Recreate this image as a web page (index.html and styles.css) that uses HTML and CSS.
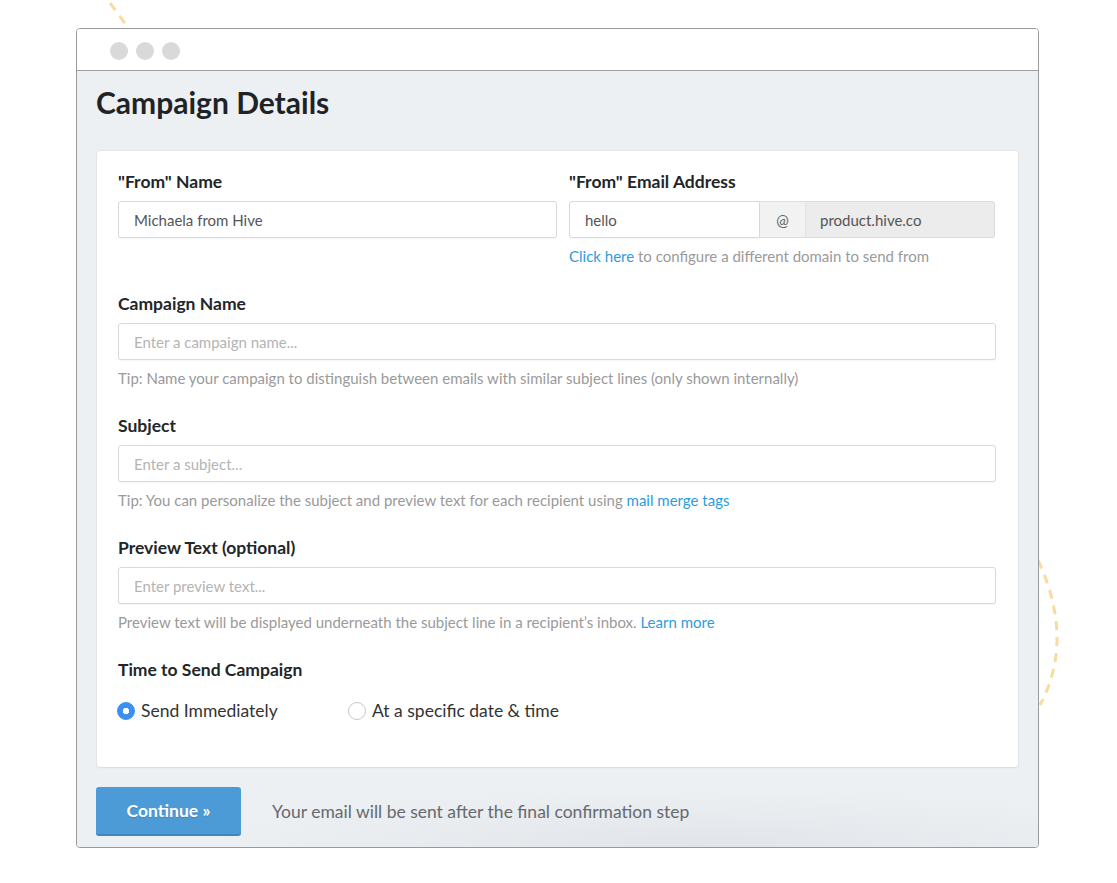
FILE: index.html
```html
<!DOCTYPE html>
<html>
<head>
<meta charset="utf-8">
<link rel="stylesheet" href="styles.css">
</head>
<body>
<svg class="deco" width="1117" height="883" viewBox="0 0 1117 883">
  <path d="M110 3 L130 30" stroke="#f8dba0" stroke-width="3" stroke-dasharray="9 7" fill="none"/>
  <path d="M1038 560 Q1075 640 1040 705" stroke="#f8dba0" stroke-width="3" stroke-dasharray="9 7" fill="none"/>
</svg>
<div class="window">
  <div class="titlebar">
    <span class="dot"></span><span class="dot"></span><span class="dot"></span>
  </div>
  <div class="content">
    <h1 class="title">Campaign Details</h1>
    <div class="card">
      <div class="row-two">
        <div class="field">
          <div class="label">"From" Name</div>
          <div class="input">Michaela from Hive</div>
        </div>
        <div class="field">
          <div class="label">"From" Email Address</div>
          <div class="input-group">
            <div class="input ig-main">hello</div>
            <div class="ig-at">@</div>
            <div class="ig-domain">product.hive.co</div>
          </div>
          <div class="help"><a class="link">Click here</a> to configure a different domain to send from</div>
        </div>
      </div>
      <div class="field">
        <div class="label">Campaign Name</div>
        <div class="input placeholder">Enter a campaign name...</div>
        <div class="help">Tip: Name your campaign to distinguish between emails with similar subject lines (only shown internally)</div>
      </div>
      <div class="field">
        <div class="label">Subject</div>
        <div class="input placeholder">Enter a subject...</div>
        <div class="help">Tip: You can personalize the subject and preview text for each recipient using <a class="link">mail merge tags</a></div>
      </div>
      <div class="field">
        <div class="label">Preview Text (optional)</div>
        <div class="input placeholder">Enter preview text...</div>
        <div class="help">Preview text will be displayed underneath the subject line in a recipient’s inbox. <a class="link">Learn more</a></div>
      </div>
      <div class="field last">
        <div class="label">Time to Send Campaign</div>
        <div class="radios">
          <div class="radio"><span class="circle checked"></span>Send Immediately</div>
          <div class="radio"><span class="circle"></span>At a specific date &amp; time</div>
        </div>
      </div>
    </div>
    <div class="footer">
      <div class="btn">Continue »</div>
      <div class="footnote">Your email will be sent after the final confirmation step</div>
    </div>
  </div>
</div>
</body>
</html>
```

FILE: styles.css
```css
html, body {
  margin: 0;
  padding: 0;
  background: #fff;
}
body {
  font-family: Lato, "Open Sans", sans-serif;
  color: #222;
  position: relative;
  width: 1117px;
  height: 883px;
  overflow: hidden;
}
.deco {
  position: absolute;
  left: 0;
  top: 0;
  z-index: 0;
}
.window {
  position: relative;
  z-index: 1;
  margin: 28px 0 0 76px;
  width: 961px;
  height: 818px;
  border: 1px solid #9a9a9a;
  border-radius: 4px;
  background: #edf0f3;
  overflow: hidden;
  display: flex;
  flex-direction: column;
}
.titlebar {
  height: 42px;
  background: #fff;
  border-bottom: 1px solid #a0a0a0;
  display: flex;
  align-items: center;
  gap: 8px;
  padding-left: 33px;
  padding-top: 2px;
  box-sizing: border-box;
  flex-shrink: 0;
}
.dot {
  width: 18px;
  height: 18px;
  border-radius: 50%;
  background: #d9d9d9;
}
.content {
  flex: 1;
  padding: 13px 20px 0 20px;
  background: radial-gradient(ellipse 500px 60px at 620px 100%, #e1e5e9 0%, rgba(237,240,243,0) 100%), #edf0f3;
}
.title {
  margin: 0 0 31px -1px;
  font-size: 30px;
  line-height: 36px;
  font-weight: 700;
  color: #1f2326;
}
.card {
  background: #fff;
  border-radius: 3px;
  box-shadow: 0 0 2px rgba(0,0,0,0.12), 0 1px 2px rgba(0,0,0,0.06);
  padding: 20px 22px 45px 21px;
}
.row-two {
  display: grid;
  grid-template-columns: 439px 1fr;
  column-gap: 12px;
  margin-bottom: 27px;
}
.row-two .field {
  margin-bottom: 0;
}
.field {
  margin-bottom: 27px;
}
.field.last {
  margin-bottom: 0;
}
.label {
  font-size: 17.5px;
  line-height: 22px;
  font-weight: 700;
  color: #222629;
  margin-bottom: 8px;
}
.input {
  height: 35px;
  border: 1px solid #d9d9d9;
  border-radius: 3px;
  box-shadow: 0 1px 1px rgba(0,0,0,0.04);
  padding: 0 15px;
  display: flex;
  align-items: center;
  font-size: 15px;
  color: #555;
  background: #fff;
}
.input.placeholder {
  color: #b4b4b4;
}
.input-group {
  display: flex;
  height: 37px;
  width: 426px;
}
.ig-main {
  width: 159px;
  height: 35px;
  border-radius: 3px 0 0 3px;
}
.ig-at {
  width: 45px;
  border-top: 1px solid #dcdcdc;
  border-bottom: 1px solid #dcdcdc;
  background: #f2f2f2;
  display: flex;
  align-items: center;
  justify-content: center;
  font-size: 15px;
  color: #666;
}
.ig-domain {
  flex: 1;
  border: 1px solid #dcdcdc;
  border-left: 1px solid #e2e2e2;
  border-radius: 0 3px 3px 0;
  background: #ececec;
  display: flex;
  align-items: center;
  padding-left: 14px;
  font-size: 15px;
  color: #555;
}
.help {
  margin-top: 8px;
  font-size: 15px;
  line-height: 20px;
  color: #9a9a9a;
}
.link {
  color: #2d9be0;
  text-decoration: none;
}
.radios {
  margin-top: 19px;
  display: flex;
  height: 22px;
  align-items: center;
}
.radio {
  display: flex;
  align-items: center;
  font-size: 17.5px;
  color: #333;
  line-height: 22px;
}
.radio:first-child {
  width: 231px;
  margin-left: -1px;
}
.circle {
  width: 16px;
  height: 16px;
  border: 1px solid #c8c8c8;
  border-radius: 50%;
  margin-right: 6px;
  box-sizing: content-box;
  background: #fff;
}
.circle.checked {
  border-color: #3b8ff0;
  background: radial-gradient(circle, #fff 0 3px, #3b8ff0 3.5px);
}
.footer {
  display: flex;
  align-items: center;
  margin-top: 20px;
}
.btn {
  width: 145px;
  height: 47px;
  margin-left: -1px;
  background: #4d9bd6;
  border-bottom: 2px solid #3d86c0;
  border-radius: 3px;
  color: #fff;
  font-weight: 700;
  font-size: 17.5px;
  display: flex;
  align-items: center;
  justify-content: center;
  text-shadow: 0 1px 1px rgba(0,0,0,0.15);
}
.footnote {
  margin-left: 31px;
  font-size: 17.5px;
  color: #666a6e;
}
```
